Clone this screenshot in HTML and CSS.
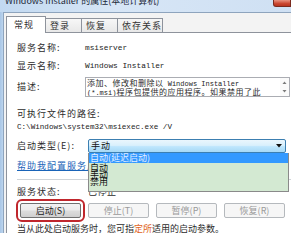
FILE: index.html
```html
<!DOCTYPE html>
<html>
<head>
<meta charset="utf-8">
<link rel="stylesheet" href="styles.css">
</head>
<body>
<div class="win">
  <div class="titlebar">
    <span class="title">Windows Installer 的属性(本地计算机)</span>
    <span class="close"></span>
  </div>
  <div class="frame">
    <div class="client">
      <div class="tabs">
        <div class="tab sel">常规</div>
        <div class="tab t2">登录</div>
        <div class="tab t3">恢复</div>
        <div class="tab t4">依存关系</div>
      </div>
      <div class="panel">
        <div class="row r1"><span class="lbl">服务名称:</span><span class="mono">msiserver</span></div>
        <div class="row r2"><span class="lbl">显示名称:</span><span class="mono">Windows Installer</span></div>
        <div class="row desc">
          <span class="lbl">描述:</span>
          <div class="descbox">
            <div class="desctext">
              <div>添加、修改和删除以<span class="mono sm"> Windows Installer</span></div>
              <div><span class="mono sm">(*.msi)</span>程序包提供的应用程序。如果禁用了此</div>
            </div>
            <div class="sbar">
              <svg width="7" height="18" viewBox="0 0 7 18"><path d="M1.5 6 L3.5 3.5 L5.5 6 Z" fill="#7a7a7a"/><path d="M1.5 12 L3.5 14.5 L5.5 12 Z" fill="#7a7a7a"/></svg>
            </div>
          </div>
        </div>
        <div class="row r4"><span class="lbl wide">可执行文件的路径:</span></div>
        <div class="row r5"><span class="mono path">C:\Windows\system32\msiexec.exe /V</span></div>
        <div class="row r6">
          <span class="lbl">启动类型(E):</span>
          <div class="combo">
            <span class="cval">手动</span>
            <svg class="arrow" width="6" height="4" viewBox="0 0 6 4"><path d="M0 0 H6 L3 3.5 Z" fill="#111"/></svg>
            <div class="list">
              <div class="opt hi">自动(延迟启动)</div>
              <div class="opt">自动</div>
              <div class="opt">手动</div>
              <div class="opt">禁用</div>
            </div>
          </div>
        </div>
        <div class="row r7"><span class="link">帮助我配置服务启动选项。</span></div>
        <div class="sep"></div>
        <div class="row r8"><span class="lbl">服务状态:</span><span class="val">已停止</span></div>
        <div class="btns">
          <div class="btn on">启动(S)</div>
          <div class="btn off">停止(T)</div>
          <div class="btn off">暂停(P)</div>
          <div class="btn off">恢复(R)</div>
        </div>
        <div class="row note">当从此处启动服务时，您可指<span class="hl">定所</span>适用的启动参数。</div>
      </div>
    </div>
  </div>
</div>
</body>
</html>
```
FILE: styles.css
```css
html, body { margin: 0; padding: 0; }
body {
  width: 291px; height: 233px; overflow: hidden;
  background: #f0f0f0;
  font-family: "Noto Sans CJK SC", sans-serif;
  color: #2b2b2b;
}
.win {
  width: 291px; height: 233px;
  background: linear-gradient(90deg, #a9c6e6, #bcd5ee 3px);
}
.titlebar {
  height: 12px; display: flex; justify-content: space-between; align-items: flex-start;
  overflow: hidden;
  background: linear-gradient(90deg, #c2d9f1, #d7e6f6 40%, #cfe0f3);
}
.title {
  font-size: 9px; line-height: 12px; margin-top: -5px; padding-left: 5px;
  color: #1e2a3a; white-space: nowrap;
}
.close {
  width: 18px; height: 7px; box-sizing: border-box;
  background: linear-gradient(#e8917f, #c9452f 60%, #b8341f);
  border: 1px solid #7a2a1e; border-top: none;
  border-radius: 0 0 0 3px;
}
.frame { display: flex; padding-left: 3px; }
.client {
  flex: 1; height: 221px; overflow: hidden;
  background: #f3f3f3;
  border-left: 1px solid #8ea4bd;
  border-top: 1px solid #8ea4bd;
}
.tabs { display: flex; align-items: flex-end; padding: 3px 0 0 2px; }
.tab {
  box-sizing: border-box; height: 14px;
  border: 1px solid #8e939c; border-bottom: none; border-left: none;
  background: linear-gradient(#f7f7f7, #e8e8e8);
  font-size: 9px; line-height: 13px; letter-spacing: 1px;
  padding-left: 4px; white-space: nowrap; color: #333;
}
.tab.sel {
  width: 40px; height: 17px; margin-bottom: -1px; position: relative; z-index: 1;
  background: #fff; border-left: 1px solid #8e939c; padding-left: 7px; line-height: 15px;
}
.t2 { width: 36px; }
.t3 { width: 36px; }
.t4 { width: 45px; }
.panel {
  margin-left: 2px; margin-right: -6px;
  background: #fff;
  border-top: 1px solid #8e939c; border-left: 1px solid #8e939c;
  height: 200px;
  padding: 9px 0 0 10px;
}
.row { display: flex; align-items: center; height: 12px; line-height: 12px; font-size: 9px; white-space: nowrap; }
.lbl { width: 68px; flex: none; letter-spacing: 1px; }
.lbl.wide { width: auto; }
.mono { font-family: "Liberation Mono", monospace; font-size: 7.8px; letter-spacing: 0; color: #222; }
.mono.sm { font-size: 7px; }
.mono.path { font-size: 7.6px; }
.r2 { margin-top: 6px; }
.desc { height: 20px; margin-top: 5px; }
.descbox {
  width: 205px; height: 20px; box-sizing: border-box; flex: none;
  border: 1px solid #abadb3; display: flex; overflow: hidden;
}
.desctext { flex: 1; font-size: 8px; line-height: 8px; letter-spacing: 0.5px; padding: 1px 0 0 1px; overflow: hidden; }
.sbar { width: 9px; flex: none; display: flex; justify-content: center; background: #fafafa; }
.r4 { margin-top: 11px; }
.r5 { margin-top: 1px; }
.r6 { height: 14px; margin-top: 6px; }
.combo {
  position: relative; margin-left: 3px; width: 198px; height: 14px; box-sizing: border-box;
  border: 1px solid #3c7fb1; border-radius: 2px;
  background: linear-gradient(#eaf6fd, #d9f0fc 45%, #bee6fd 55%, #a7d9f5);
  display: flex; align-items: center; justify-content: space-between;
}
.cval { padding-left: 2px; letter-spacing: 1px; font-size: 9px; color: #111; }
.arrow { margin-right: 3px; }
.list {
  position: absolute; top: 13px; left: -1px; width: 201px; height: 39px; box-sizing: border-box;
  background: #d3e9d2; border: 1px solid #8a8a8a; border-top: none; z-index: 2;
  overflow: visible;
}
.opt { font-size: 9px; line-height: 7px; height: 7px; padding-left: 1px; color: #111; }
.opt.hi { height: 10px; line-height: 10px; background: #3399ff; color: #e6efff; padding-left: 1px; margin-bottom: 1px; }
.r7 { margin-top: 7px; }
.link { color: #1a64b8; text-decoration: underline; letter-spacing: 1px; }
.sep { height: 1px; background: #cfd4d8; margin: 7px 6px 0 0; }
.r8 { margin-top: 6px; }
.val { letter-spacing: 0.5px; margin-left: 3px; }
.btns { display: flex; gap: 7px; margin-top: 5px; padding-left: 3px; }
.btn {
  width: 61px; height: 15px; box-sizing: border-box; border-radius: 2px;
  font-size: 9px; line-height: 13px; text-align: center; white-space: nowrap;
}
.btn.on {
  border: 1px solid #707070;
  background: linear-gradient(#f2f2f2, #ebebeb 48%, #dddddd 52%, #cfcfcf);
  color: #222;
  outline: 2px solid #c0272d; outline-offset: 2px;
}
.btn.off { border: 1px solid #b5b9bd; background: #f6f6f6; color: #9a9a9a; }
.note { margin-top: 5px; letter-spacing: 0; }
.hl { color: #e0631c; }
```
